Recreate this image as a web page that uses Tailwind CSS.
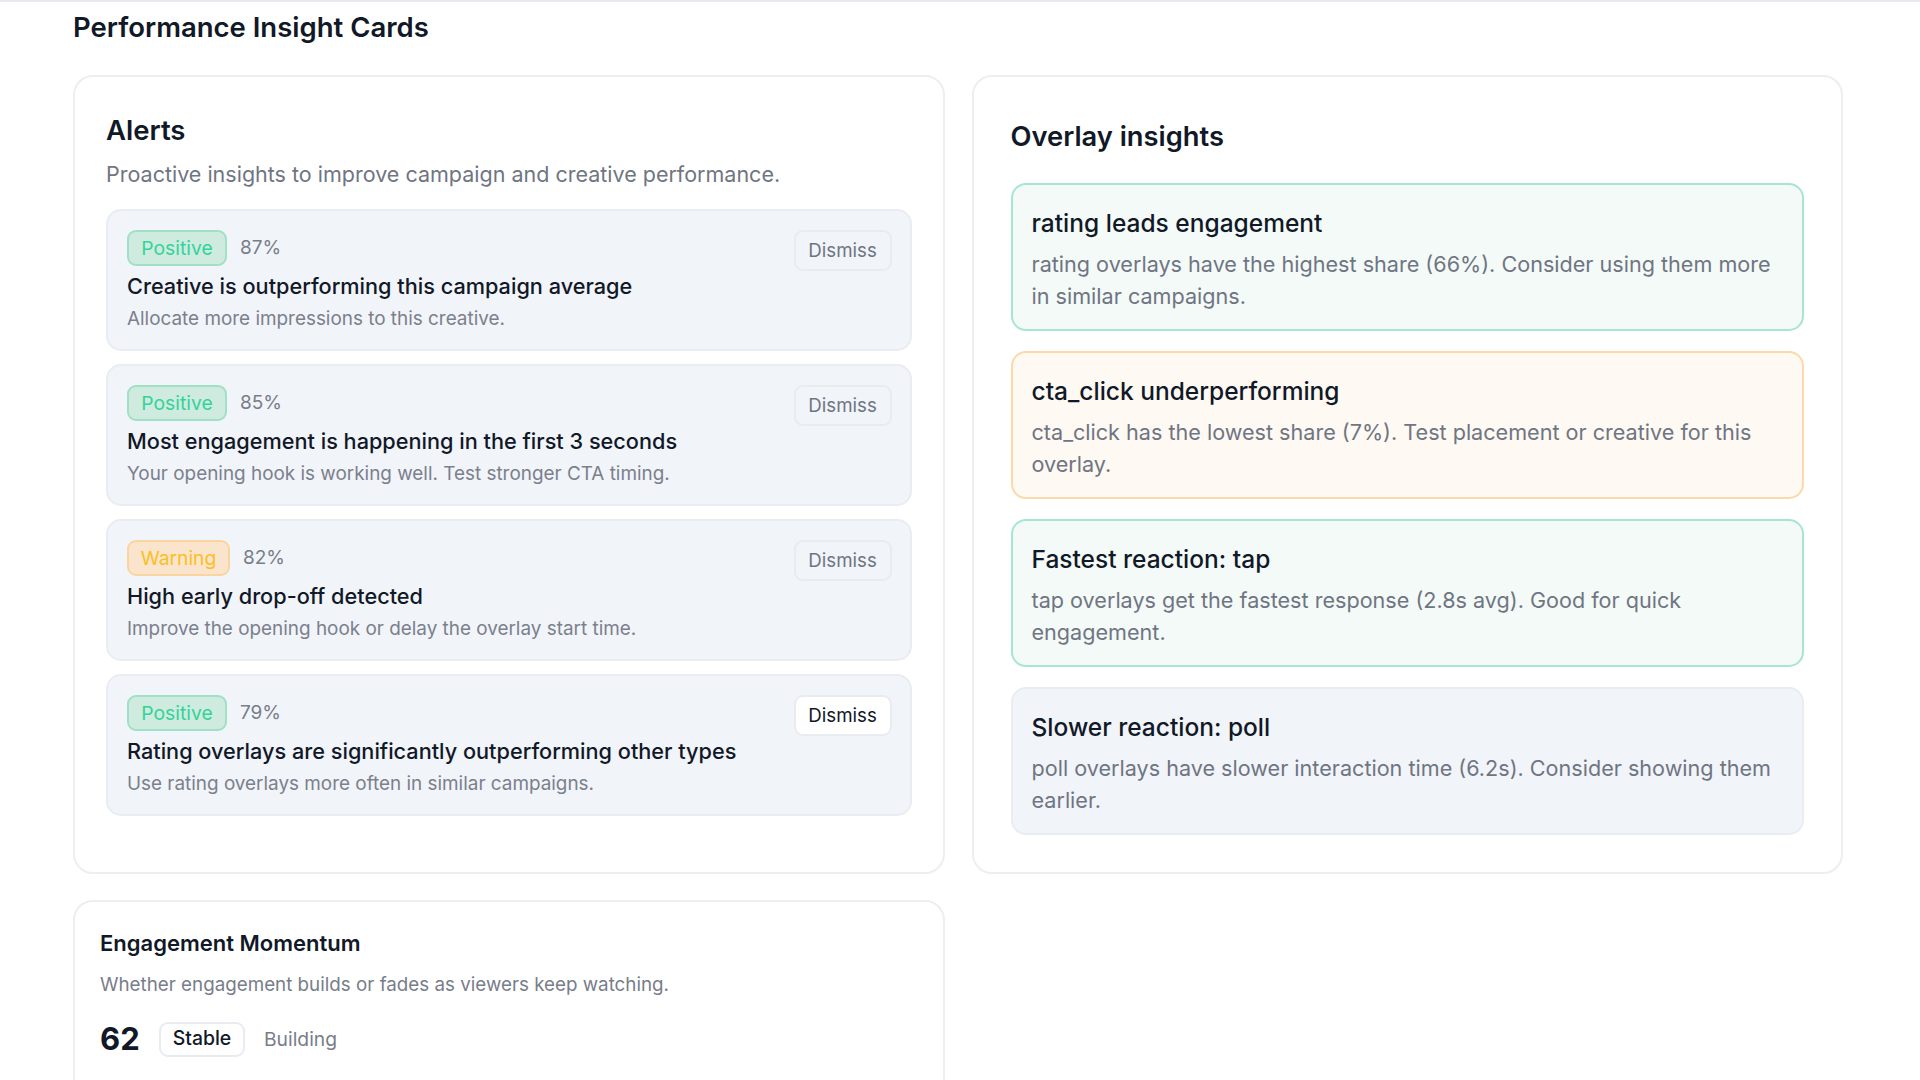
<!DOCTYPE html>
<html lang="en">
<head>
  <meta charset="UTF-8" />
  <meta name="viewport" content="width=device-width, initial-scale=1.0" />
  <title>Performance Insight Cards</title>
  <script src="https://cdn.jsdelivr.net/npm/@tailwindcss/browser@4"></script>
</head>
<body class="bg-white font-['Inter',sans-serif] text-[#111827]">
  <div class="h-screen overflow-hidden border-t-2 border-[#e8eaef] pl-[73px]">

    <h1 class="h-[55px] pt-[8px] text-[27.5px] leading-[34px] font-semibold">Performance Insight Cards</h1>

    <div class="mt-[18px] grid w-[1770px] grid-cols-2 gap-[27px]">

      <!-- alerts -->
      <section class="h-[799px] rounded-[20px] border-2 border-[#eceef2] pl-[31px] pr-[31px] pt-[32px]">
        <h2 class="text-[27.5px] leading-[42px] font-semibold">Alerts</h2>
        <p class="mt-[3px] text-[21.5px] leading-[40px] text-[#6f7582]">Proactive insights to improve campaign and creative performance.</p>

        <div class="mt-[15px] flex flex-col gap-[13px]">
          <div class="flex h-[142px] items-start justify-between rounded-[15px] border-2 border-[#e9ecf2] bg-[#f1f4f9] pl-[19px] pr-[18px] pt-[19px]">
            <div>
              <div class="flex items-center gap-[13px]">
                <span class="flex h-[36px] w-[100px] items-center justify-center rounded-[9px] border-2 border-[#a0e0c5] bg-[#cfebe0] text-[19.3px] text-[#34d399]">Positive</span>
                <span class="text-[19px] text-[#787d8a]">87%</span>
              </div>
              <h3 class="mt-[4px] text-[21.7px] leading-[32px] font-medium">Creative is outperforming this campaign average</h3>
              <p class="mt-[1px] text-[18.9px] leading-[32px] text-[#7b808c]">Allocate more impressions to this creative.</p>
            </div>
            <button class="flex h-[41px] w-[98px] items-center justify-center rounded-[9px] border-2 border-[#e8ebf0] pt-[1px] text-[18.7px] text-[#6f7582]">Dismiss</button>
          </div>

          <div class="flex h-[142px] items-start justify-between rounded-[15px] border-2 border-[#e9ecf2] bg-[#f1f4f9] pl-[19px] pr-[18px] pt-[19px]">
            <div>
              <div class="flex items-center gap-[13px]">
                <span class="flex h-[36px] w-[100px] items-center justify-center rounded-[9px] border-2 border-[#a0e0c5] bg-[#cfebe0] text-[19.3px] text-[#34d399]">Positive</span>
                <span class="text-[19px] text-[#787d8a]">85%</span>
              </div>
              <h3 class="mt-[4px] text-[21.7px] leading-[32px] font-medium">Most engagement is happening in the first 3 seconds</h3>
              <p class="mt-[1px] text-[18.9px] leading-[32px] text-[#7b808c]">Your opening hook is working well. Test stronger CTA timing.</p>
            </div>
            <button class="flex h-[41px] w-[98px] items-center justify-center rounded-[9px] border-2 border-[#e8ebf0] pt-[1px] text-[18.7px] text-[#6f7582]">Dismiss</button>
          </div>

          <div class="flex h-[142px] items-start justify-between rounded-[15px] border-2 border-[#e9ecf2] bg-[#f1f4f9] pl-[19px] pr-[18px] pt-[19px]">
            <div>
              <div class="flex items-center gap-[13px]">
                <span class="flex h-[36px] w-[103px] items-center justify-center rounded-[9px] border-2 border-[#fbd5a0] bg-[#fae5cc] text-[19.3px] text-[#fbbf24]">Warning</span>
                <span class="text-[19px] text-[#787d8a]">82%</span>
              </div>
              <h3 class="mt-[4px] text-[21.7px] leading-[32px] font-medium">High early drop-off detected</h3>
              <p class="mt-[1px] text-[18.9px] leading-[32px] text-[#7b808c]">Improve the opening hook or delay the overlay start time.</p>
            </div>
            <button class="flex h-[41px] w-[98px] items-center justify-center rounded-[9px] border-2 border-[#e8ebf0] pt-[1px] text-[18.7px] text-[#6f7582]">Dismiss</button>
          </div>

          <div class="flex h-[142px] items-start justify-between rounded-[15px] border-2 border-[#e9ecf2] bg-[#f1f4f9] pl-[19px] pr-[18px] pt-[19px]">
            <div>
              <div class="flex items-center gap-[13px]">
                <span class="flex h-[36px] w-[100px] items-center justify-center rounded-[9px] border-2 border-[#a0e0c5] bg-[#cfebe0] text-[19.3px] text-[#34d399]">Positive</span>
                <span class="text-[19px] text-[#787d8a]">79%</span>
              </div>
              <h3 class="mt-[4px] text-[21.7px] leading-[32px] font-medium">Rating overlays are significantly outperforming other types</h3>
              <p class="mt-[1px] text-[18.9px] leading-[32px] text-[#7b808c]">Use rating overlays more often in similar campaigns.</p>
            </div>
            <button class="flex h-[41px] w-[98px] items-center justify-center rounded-[9px] border-2 border-[#e8ebf0] bg-white pt-[1px] text-[18.7px] text-[#111827]">Dismiss</button>
          </div>
        </div>
      </section>

      <!-- overlay insights -->
      <section class="h-[799px] rounded-[20px] border-2 border-[#eceef2] px-[37px] pt-[38px]">
        <h2 class="text-[27.3px] leading-[44px] font-semibold">Overlay insights</h2>

        <div class="mt-[24px] flex flex-col gap-[20px]">
          <div class="h-[148px] rounded-[15px] border-2 border-[#a7e6cd] bg-[#f4faf8] px-[19px] pt-[20px]">
            <h3 class="text-[24.5px] leading-[36px] font-medium">rating leads engagement</h3>
            <p class="mt-[8px] text-[21.6px] leading-[31.5px] text-[#6f7582]">rating overlays have the highest share (66%). Consider using them more in similar campaigns.</p>
          </div>
          <div class="h-[148px] rounded-[15px] border-2 border-[#fcd9a8] bg-[#fef9f3] px-[19px] pt-[20px]">
            <h3 class="text-[24.5px] leading-[36px] font-medium">cta_click underperforming</h3>
            <p class="mt-[8px] text-[21.6px] leading-[31.5px] text-[#6f7582]">cta_click has the lowest share (7%). Test placement or creative for this overlay.</p>
          </div>
          <div class="h-[148px] rounded-[15px] border-2 border-[#a7e6cd] bg-[#f4faf8] px-[19px] pt-[20px]">
            <h3 class="text-[24.5px] leading-[36px] font-medium">Fastest reaction: tap</h3>
            <p class="mt-[8px] text-[21.6px] leading-[31.5px] text-[#6f7582]">tap overlays get the fastest response (2.8s avg). Good for quick engagement.</p>
          </div>
          <div class="h-[148px] rounded-[15px] border-2 border-[#e9ecf2] bg-[#f1f4f9] px-[19px] pt-[20px]">
            <h3 class="text-[24.5px] leading-[36px] font-medium">Slower reaction: poll</h3>
            <p class="mt-[8px] text-[21.6px] leading-[31.5px] text-[#6f7582]">poll overlays have slower interaction time (6.2s). Consider showing them earlier.</p>
          </div>
        </div>
      </section>
    </div>

    <!-- momentum -->
    <section class="mt-[26px] h-[300px] w-[871.5px] rounded-[20px] border-2 border-[#eceef2] px-[25px] pt-[25px]">
      <h2 class="text-[22px] leading-[32px] font-semibold">Engagement Momentum</h2>
      <p class="mt-[10px] text-[18.8px] leading-[32px] text-[#787d8a]">Whether engagement builds or fades as viewers keep watching.</p>
      <div class="mt-[18px] flex items-center">
        <span class="w-[59px] text-[31px] leading-[40px] font-bold">62</span>
        <span class="flex h-[35px] w-[86px] items-center justify-center rounded-[9px] border-2 border-[#e8ebf0] text-[19.4px] font-medium">Stable</span>
        <span class="ml-[19px] text-[19.3px] text-[#787d8a]">Building</span>
      </div>
    </section>
  </div>
</body>
</html>
